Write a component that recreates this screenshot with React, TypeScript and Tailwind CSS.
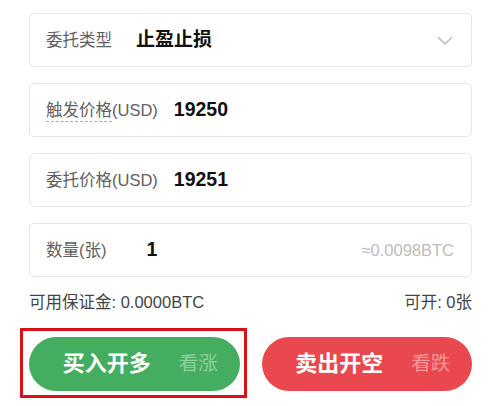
const font = { fontFamily: '"Liberation Sans", "Noto Sans CJK SC", sans-serif' };

const Field = ({ children }: { children: React.ReactNode }) => (
  <div className="flex h-[54px] items-center rounded-[5px] border border-[#e6e6e6] bg-white pl-[16px] pr-[17px]">
    {children}
  </div>
);

export default function App() {
  return (
    <div className="w-[500px] h-[406px] bg-white pl-[29px] pt-[13px]" style={font}>
      <div className="w-[443px]">
        {/* Form fields */}
        <div className="flex flex-col gap-4">
          <Field>
            <span className="text-[16.5px] text-[#606060]">委托类型</span>
            <span className="ml-[24px] text-[19px] font-bold text-[#111]">止盈止损</span>
            <svg className="ml-auto mr-[1px]" width="16" height="9" viewBox="0 0 16 9" fill="none">
              <polyline points="1,1 8,8 15,1" stroke="#b5b5b5" strokeWidth="1.3" />
            </svg>
          </Field>
          <Field>
            <span className="text-[16.5px] text-[#606060]">
              <span className="border-b border-dashed border-[#aaa] pb-[2px]">触发价格</span>(USD)
            </span>
            <span className="ml-[16px] text-[19.5px] font-bold text-[#111]">19250</span>
          </Field>
          <Field>
            <span className="text-[16.5px] text-[#606060]">委托价格(USD)</span>
            <span className="ml-[16px] text-[19.5px] font-bold text-[#111]">19251</span>
          </Field>
          <Field>
            <span className="text-[16.5px] text-[#606060]">数量(张)</span>
            <span className="ml-[40px] text-[19.5px] font-bold text-[#111]">1</span>
            <span className="ml-auto text-[16.5px] text-[#bdbdbd]">≈0.0098BTC</span>
          </Field>
        </div>

        {/* Balance row */}
        <div className="mt-[13px] flex items-center justify-between text-[16.5px] text-[#444]">
          <span>可用保证金: 0.0000BTC</span>
          <span>可开: 0张</span>
        </div>

        {/* Action buttons */}
        <div className="mt-[22px] grid grid-cols-2 gap-[22px]">
          <div className="relative">
            <button className="flex h-[54px] w-full items-center justify-center gap-[28px] rounded-full bg-[#45ad5f] pl-3">
              <span className="text-[22px] font-bold text-white">买入开多</span>
              <span className="text-[19.5px] text-[#8fcf9e]">看涨</span>
            </button>
            <div className="pointer-events-none absolute -left-[9px] -top-[9px] -right-[7px] -bottom-[7px] border-[3px] border-[#d8101a]" />
          </div>
          <button className="flex h-[54px] w-full items-center justify-center gap-[28px] rounded-full bg-[#e8484e] pl-3">
            <span className="text-[22px] font-bold text-white">卖出开空</span>
            <span className="text-[19.5px] text-[#f29a9d]">看跌</span>
          </button>
        </div>
      </div>
    </div>
  );
}
